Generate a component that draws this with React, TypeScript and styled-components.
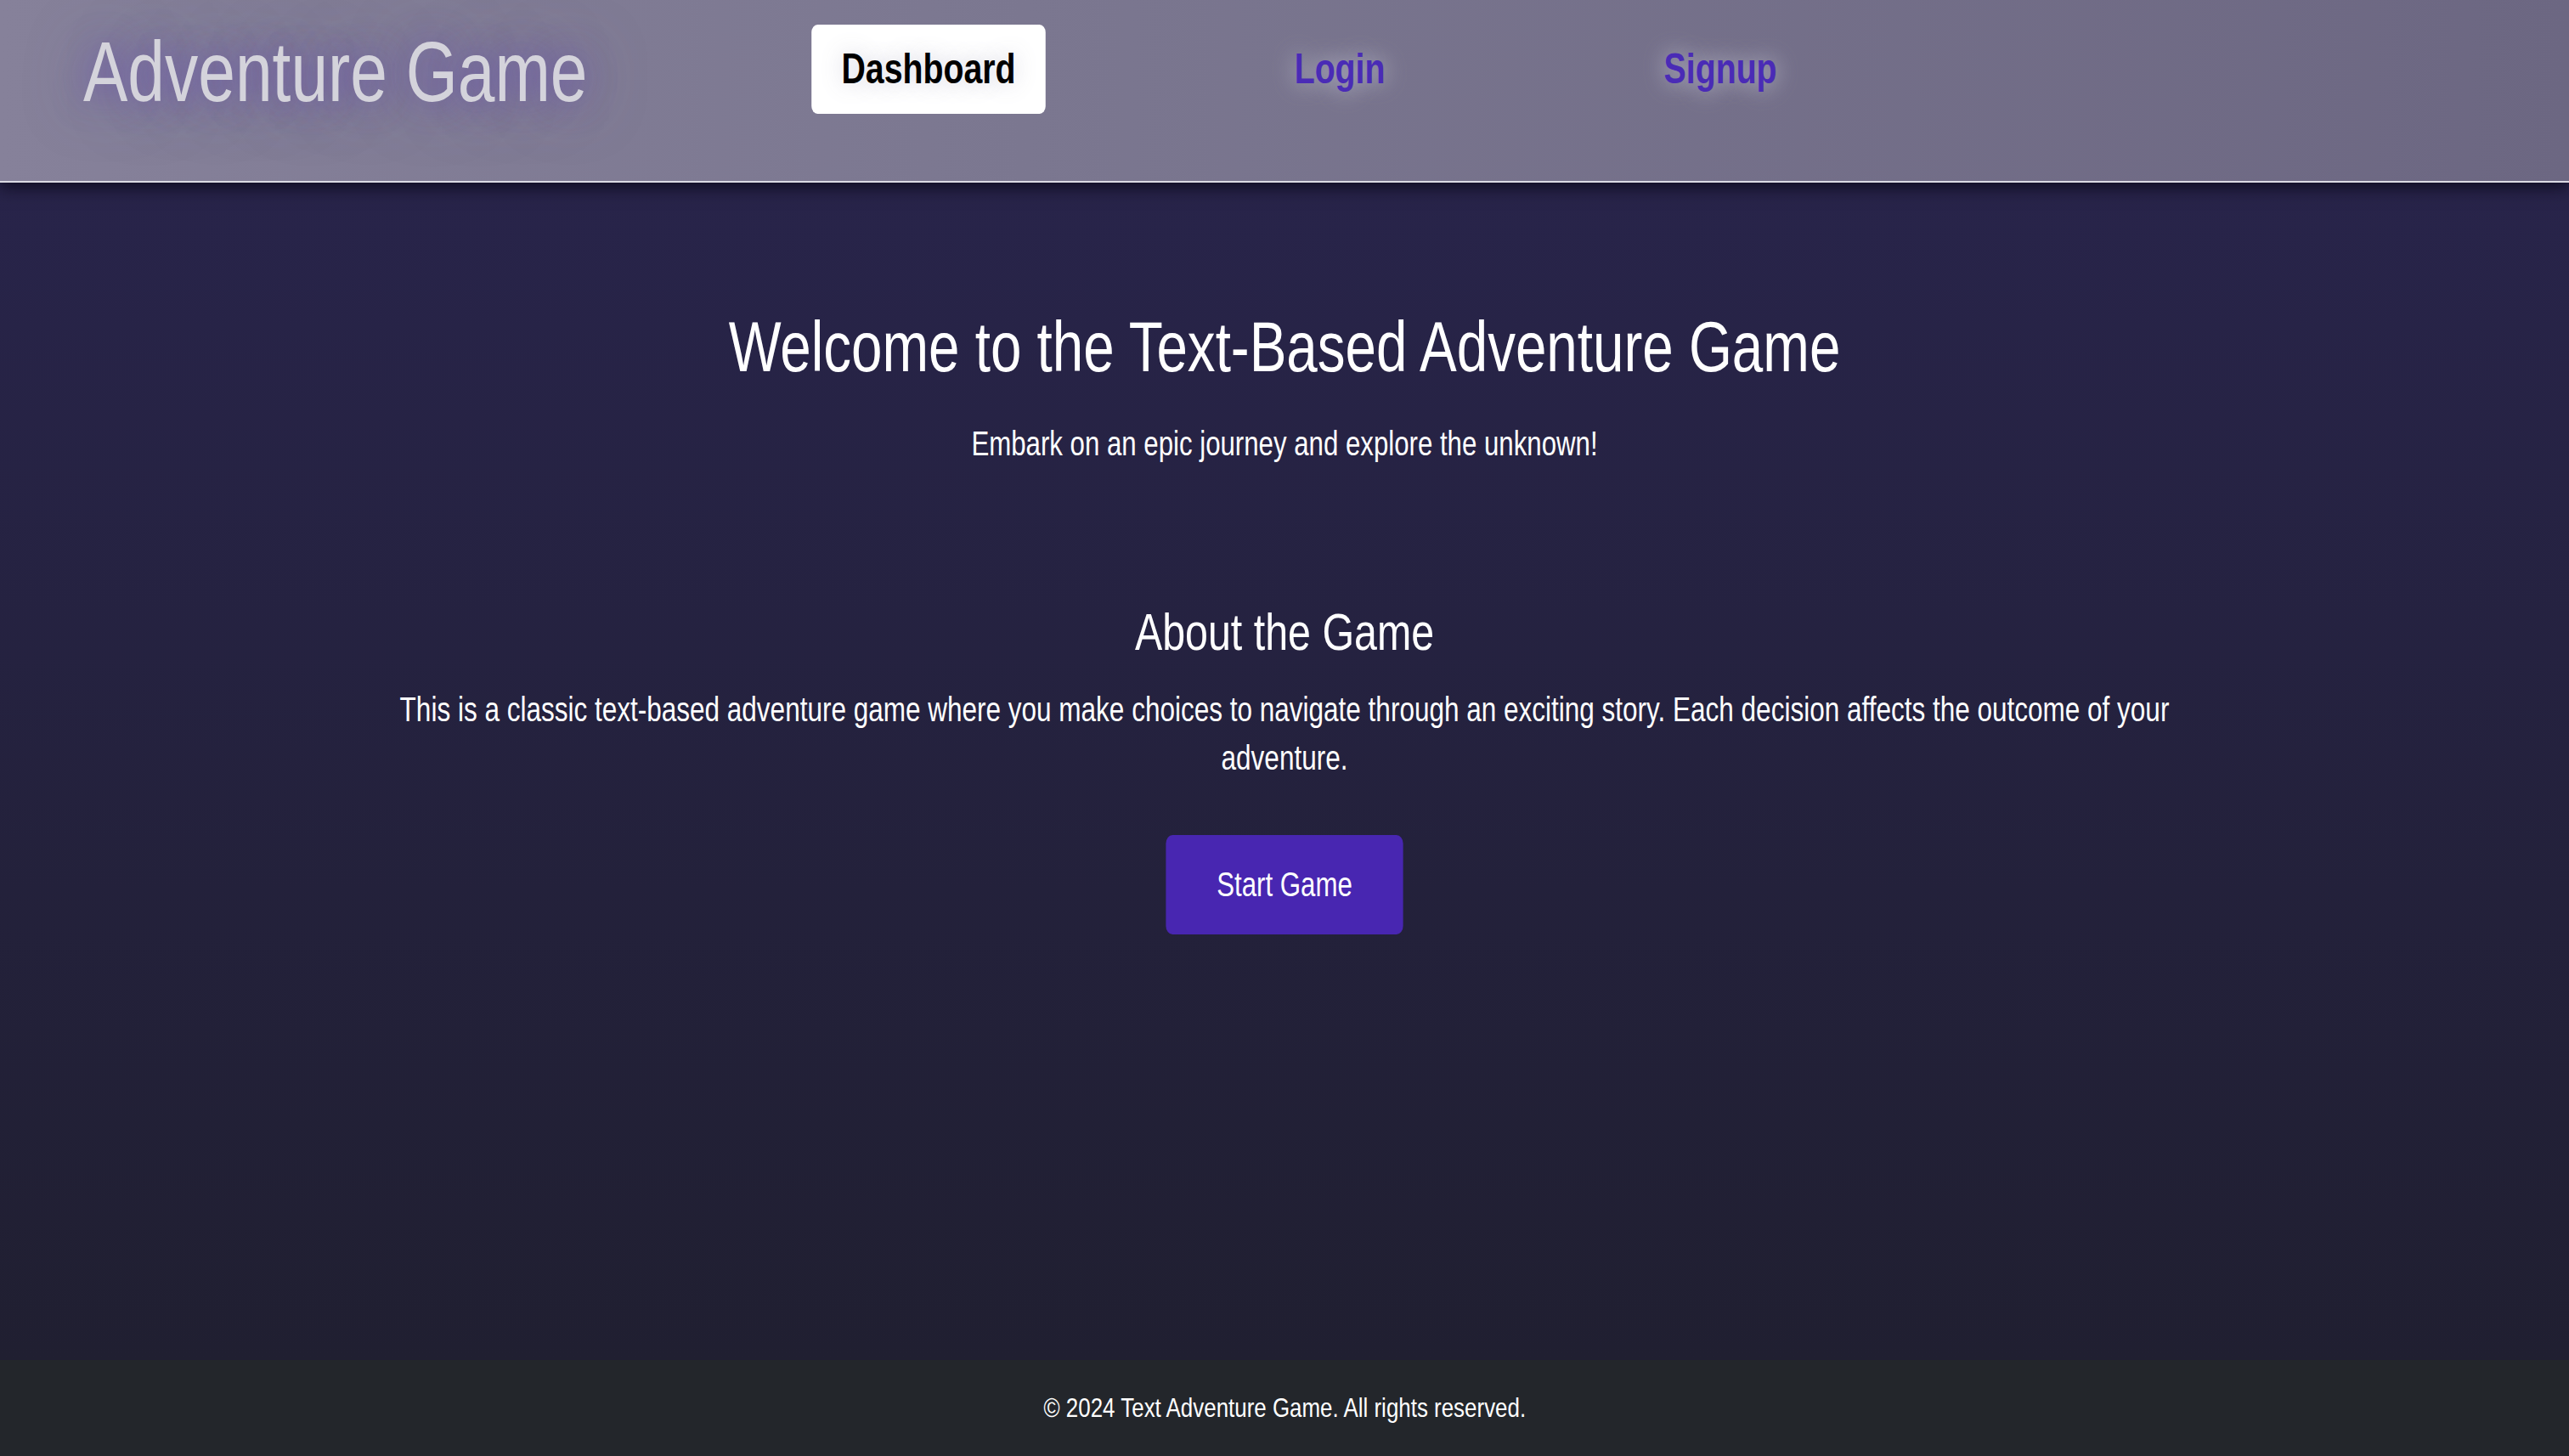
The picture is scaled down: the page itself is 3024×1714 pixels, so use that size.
import React from 'react';
import styled, { createGlobalStyle } from 'styled-components';

// The reference face is a condensed grotesque; Liberation Sans is squeezed to match it.
const CONDENSE = 0.785;

const GlobalStyle = createGlobalStyle`
  html, body {
    margin: 0;
    padding: 0;
  }
  body {
    font-family: 'Liberation Sans', Arial, sans-serif;
    background: #1f1e30;
    overflow-x: hidden;
  }
`;

const Page = styled.div`
  min-height: 1714px;
  display: flex;
  flex-direction: column;
`;

const Header = styled.header`
  position: relative;
  z-index: 2;
  height: 215px;
  box-sizing: border-box;
  padding: 29px 0 0 98px;
  background: linear-gradient(90deg, #86819a 0%, #7b7790 40%, #6c6782 100%);
  border-bottom: 2px solid #dcdbe4;
  box-shadow: 0 6px 18px rgba(10, 8, 25, 0.8);
`;

const HeaderInner = styled.div`
  display: flex;
  align-items: flex-start;
  transform: scaleX(${CONDENSE});
  transform-origin: left top;
`;

const Logo = styled.h1`
  margin: 0;
  font-size: 100px;
  font-weight: 400;
  line-height: 1.1;
  color: #d4d3db;
  text-shadow: 0 0 40px rgba(108, 88, 172, 0.85), 0 0 80px rgba(108, 88, 172, 0.6);
`;

const Nav = styled.nav`
  display: flex;
  gap: 328px;
  margin-left: 336px;
`;

const NavLink = styled.a<{ $active?: boolean }>`
  display: block;
  padding: 25px 45px;
  border-radius: 9px;
  font-size: 50px;
  font-weight: 700;
  line-height: 1.1;
  text-decoration: none;
  cursor: pointer;
  color: ${(p) => (p.$active ? '#000' : '#4a2bb6')};
  background: ${(p) => (p.$active ? '#fff' : 'transparent')};
  text-shadow: 0 0 30px rgba(205, 205, 218, 0.9);
`;

const Main = styled.main`
  flex: 1;
  padding: 146px 0 80px;
  background: linear-gradient(180deg, #28244a 0%, #201f31 100%);
  color: #fff;
`;

const Column = styled.div`
  display: flex;
  flex-direction: column;
  align-items: center;
  text-align: center;
  transform: scaleX(0.78);
  transform-origin: center top;
`;

const Title = styled.h2`
  margin: 0;
  font-size: 84px;
  font-weight: 400;
  line-height: 1.12;
  white-space: nowrap;
`;

const Tagline = styled.p`
  margin: 45px 0 0;
  font-size: 40px;
  line-height: 1.12;
`;

const SectionTitle = styled.h3`
  margin: 163px 0 0;
  font-size: 62px;
  font-weight: 400;
  line-height: 1.15;
`;

const Description = styled.p`
  margin: 28px 0 0;
  max-width: 2760px;
  font-size: 40.4px;
  line-height: 57px;
`;

const StartButton = styled.button`
  margin-top: 62px;
  padding: 36px 77px;
  border: none;
  border-radius: 10px;
  background: #4826b1;
  color: #fff;
  font-family: inherit;
  font-size: 40px;
  line-height: 1.12;
  cursor: pointer;
`;

const Footer = styled.footer`
  height: 113px;
  display: flex;
  align-items: center;
  justify-content: center;
  background: #23262b;
  color: #fff;
`;

const FooterText = styled.span`
  font-size: 32px;
  transform: scaleX(0.81);
`;

export default function App() {
  return (
    <Page>
      <GlobalStyle />
      <Header>
        <HeaderInner>
          <Logo>Adventure Game</Logo>
          <Nav>
            <NavLink $active>Dashboard</NavLink>
            <NavLink>Login</NavLink>
            <NavLink>Signup</NavLink>
          </Nav>
        </HeaderInner>
      </Header>
      <Main>
        <Column>
          <Title>Welcome to the Text-Based Adventure Game</Title>
          <Tagline>Embark on an epic journey and explore the unknown!</Tagline>
          <SectionTitle>About the Game</SectionTitle>
          <Description>
            This is a classic text-based adventure game where you make choices to navigate through an exciting
            story. Each decision affects the outcome of your adventure.
          </Description>
          <StartButton>Start Game</StartButton>
        </Column>
      </Main>
      <Footer>
        <FooterText>© 2024 Text Adventure Game. All rights reserved.</FooterText>
      </Footer>
    </Page>
  );
}
